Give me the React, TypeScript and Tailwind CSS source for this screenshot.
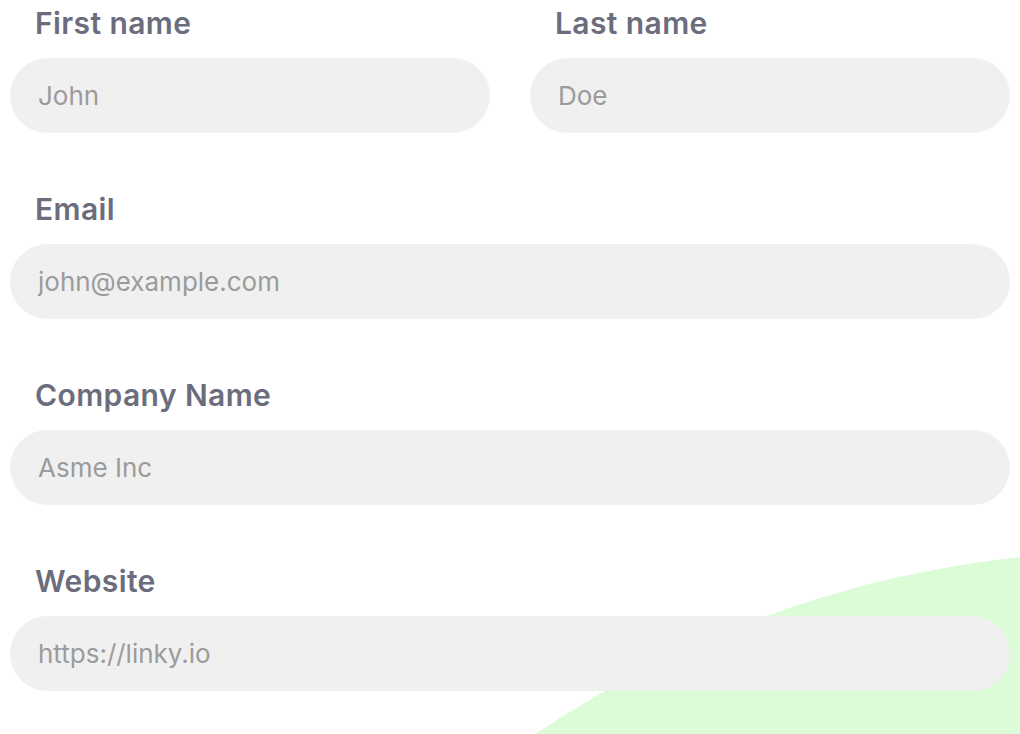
import React from 'react';

const fieldLabel =
  'block pl-[25px] text-[30px] leading-[36px] font-semibold text-[#6b6d7c] tracking-[0.4px]';
const fieldInput =
  'block w-full h-[75px] rounded-full bg-[#f0f0f0] pl-[28px] pr-6 text-[26px] text-[#555] placeholder:text-[#9b9b9b] outline-none';

function Field({ label, placeholder }: { label: string; placeholder: string }) {
  return (
    <div className="flex flex-col">
      <label className={fieldLabel}>{label}</label>
      <input className={`${fieldInput} mt-[17px]`} placeholder={placeholder} />
    </div>
  );
}

export default function App() {
  return (
    <div
      className="relative h-[734px] w-full overflow-hidden bg-white"
      style={{ fontFamily: 'Inter, "Noto Sans", sans-serif' }}
    >
      {/* green decoration behind the form */}
      <svg className="absolute right-0 bottom-0" width="490" height="180" viewBox="530 554 490 180">
        <path d="M535 734 Q 760 585 1020 557 L1020 734 Z" fill="#dcfcd8" />
      </svg>

      <form className="relative flex flex-col gap-[58px] px-[10px] pt-[5px]">
        <div className="grid grid-cols-2 gap-10">
          <Field label="First name" placeholder="John" />
          <Field label="Last name" placeholder="Doe" />
        </div>
        <Field label="Email" placeholder="john@example.com" />
        <Field label="Company Name" placeholder="Asme Inc" />
        <Field label="Website" placeholder="https://linky.io" />
      </form>
    </div>
  );
}
